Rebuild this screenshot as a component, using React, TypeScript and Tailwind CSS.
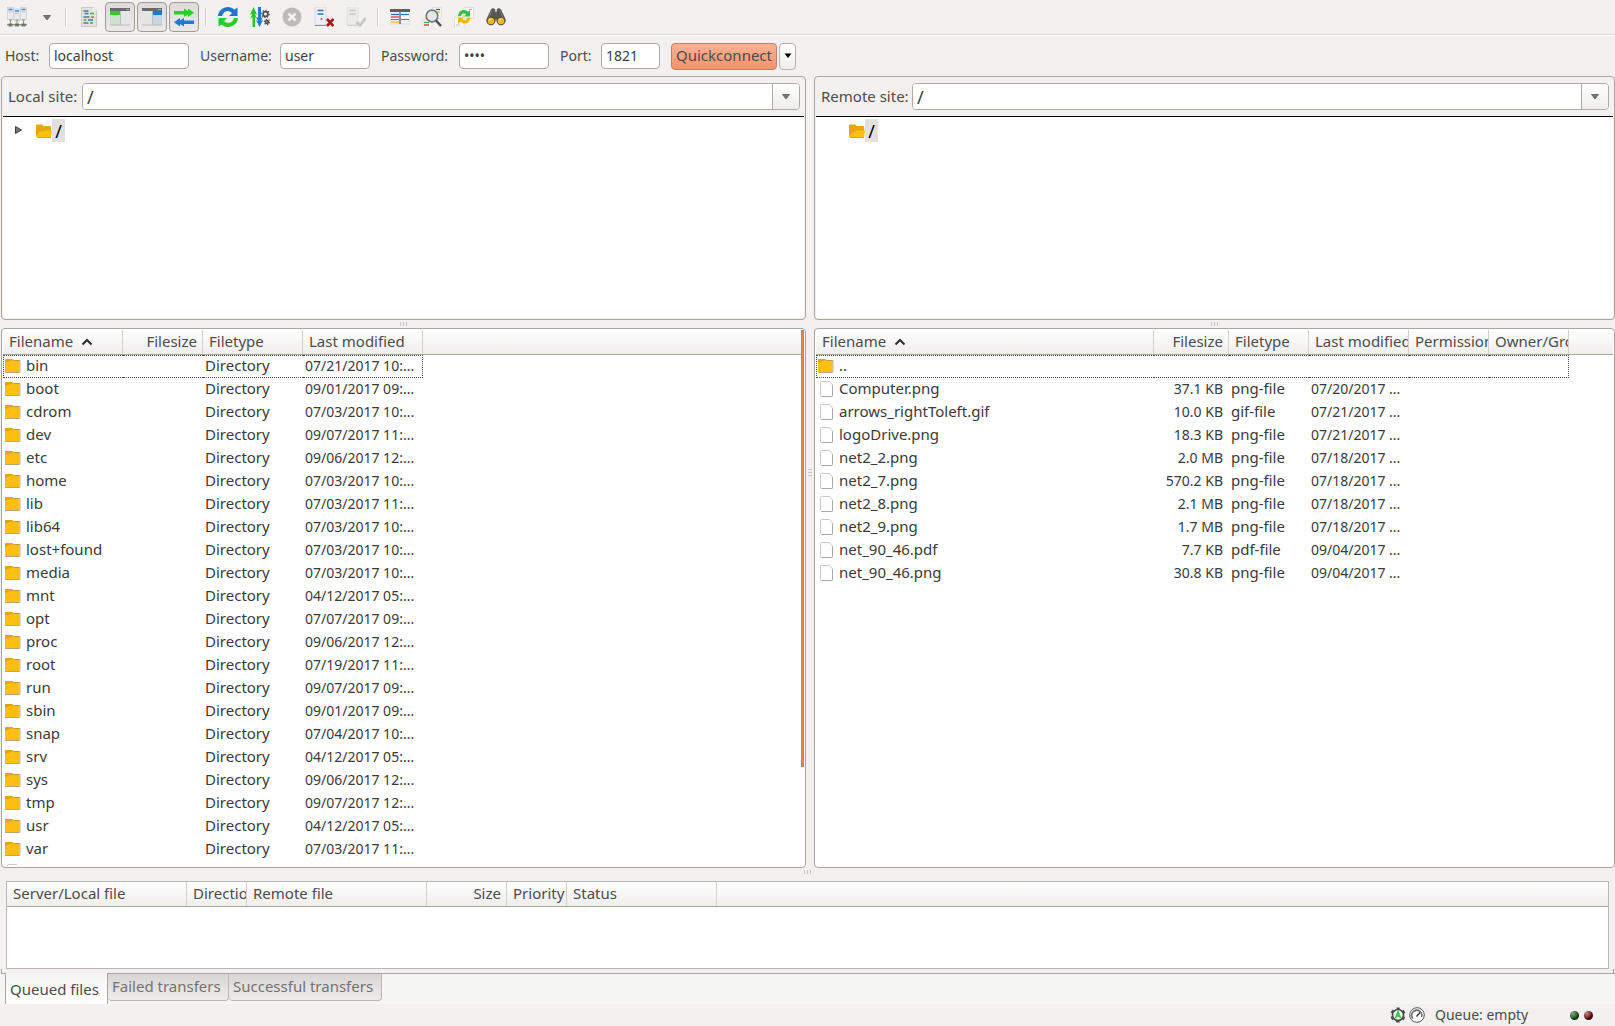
import React from "react";

type Column = { label: string; width: string; right?: boolean; sort?: boolean };

const localColumns: Column[] = [
  { label: "Filename", width: "w-[120px]", sort: true },
  { label: "Filesize", width: "w-[80px]", right: true },
  { label: "Filetype", width: "w-[100px]" },
  { label: "Last modified", width: "w-[120px]" },
];

const remoteColumns: Column[] = [
  { label: "Filename", width: "w-[338px]", sort: true },
  { label: "Filesize", width: "w-[75px]", right: true },
  { label: "Filetype", width: "w-[80px]" },
  { label: "Last modified", width: "w-[100px]" },
  { label: "Permission", width: "w-[80px]" },
  { label: "Owner/Group", width: "w-[80px]" },
];

const queueColumns: Column[] = [
  { label: "Server/Local file", width: "w-[180px]" },
  { label: "Direction", width: "w-[60px]" },
  { label: "Remote file", width: "w-[180px]" },
  { label: "Size", width: "w-[80px]", right: true },
  { label: "Priority", width: "w-[60px]" },
  { label: "Status", width: "w-[150px]" },
];

const localRows: string[][] = [
  ["bin", "", "Directory", "07/21/2017 10:..."],
  ["boot", "", "Directory", "09/01/2017 09:..."],
  ["cdrom", "", "Directory", "07/03/2017 10:..."],
  ["dev", "", "Directory", "09/07/2017 11:..."],
  ["etc", "", "Directory", "09/06/2017 12:..."],
  ["home", "", "Directory", "07/03/2017 10:..."],
  ["lib", "", "Directory", "07/03/2017 11:..."],
  ["lib64", "", "Directory", "07/03/2017 10:..."],
  ["lost+found", "", "Directory", "07/03/2017 10:..."],
  ["media", "", "Directory", "07/03/2017 10:..."],
  ["mnt", "", "Directory", "04/12/2017 05:..."],
  ["opt", "", "Directory", "07/07/2017 09:..."],
  ["proc", "", "Directory", "09/06/2017 12:..."],
  ["root", "", "Directory", "07/19/2017 11:..."],
  ["run", "", "Directory", "09/07/2017 09:..."],
  ["sbin", "", "Directory", "09/01/2017 09:..."],
  ["snap", "", "Directory", "07/04/2017 10:..."],
  ["srv", "", "Directory", "04/12/2017 05:..."],
  ["sys", "", "Directory", "09/06/2017 12:..."],
  ["tmp", "", "Directory", "09/07/2017 12:..."],
  ["usr", "", "Directory", "04/12/2017 05:..."],
  ["var", "", "Directory", "07/03/2017 11:..."],
];

const remoteRows: string[][] = [
  ["..", "", "", "", "", ""],
  ["Computer.png", "37.1 KB", "png-file", "07/20/2017 ...", "", ""],
  ["arrows_rightToleft.gif", "10.0 KB", "gif-file", "07/21/2017 ...", "", ""],
  ["logoDrive.png", "18.3 KB", "png-file", "07/21/2017 ...", "", ""],
  ["net2_2.png", "2.0 MB", "png-file", "07/18/2017 ...", "", ""],
  ["net2_7.png", "570.2 KB", "png-file", "07/18/2017 ...", "", ""],
  ["net2_8.png", "2.1 MB", "png-file", "07/18/2017 ...", "", ""],
  ["net2_9.png", "1.7 MB", "png-file", "07/18/2017 ...", "", ""],
  ["net_90_46.pdf", "7.7 KB", "pdf-file", "09/04/2017 ...", "", ""],
  ["net_90_46.png", "30.8 KB", "png-file", "09/04/2017 ...", "", ""],
];

/* ---------- small drawings ---------- */

const FolderIcon = () => (
  <svg className="h-4 w-4 shrink-0" viewBox="0 0 16 16" aria-hidden="true">
    <path d="M0 2q0-1 1-1h6l1.500 1H14.500v12.500H0z" fill="#ffbf12" />
    <path d="M0 5V2q0-1 1-1h6L8.500 2 4 3.500z" fill="#e3a30f" />
    <path d="M8.500 2.500h6.500v11q0 1-1 1H0" fill="none" stroke="#9a8f6c" strokeOpacity=".7" />
  </svg>
);

const OpenFolderIcon = () => (
  <svg className="h-4 w-4 shrink-0" viewBox="0 0 16 16" aria-hidden="true">
    <path d="M0 2.500Q0 1.500 1 1.500h5L7.500 3H14q1 0 1 1v10H1q-1 0-1-1z" fill="#e6a60e" />
    <path d="M0 13L4.500 8.500H7L8 7.500h8L15.200 14H1z" fill="#ffbf12" />
    <path d="M1 14.500h14" stroke="#aaa59a" />
  </svg>
);

const FileIcon = () => (
  <svg className="h-[18px] w-4 shrink-0" viewBox="0 0 16 18" aria-hidden="true">
    <path d="M2.500 2.500q0-1 1-1h8l3 3.500v10.500q0 1-1 1h-10q-1 0-1-1z" fill="#fff" stroke="#c9cac6" />
    <path d="M14.500 5.500v10q0 1-1 1h-10" fill="none" stroke="#a9aaa6" />
  </svg>
);

const Down = ({ black = false }: { black?: boolean }) => (
  <svg className="h-[6px] w-2" viewBox="0 0 8 6" aria-hidden="true">
    <path d="M.5 .5h7L4 5z" fill={black ? "#000" : "#77767a"} stroke={black ? "none" : "#5c5b5a"} strokeWidth=".8" />
  </svg>
);

const I = ({ children }: { children: React.ReactNode }) => (
  <svg className="h-5 w-5" viewBox="0 0 20 20" aria-hidden="true">{children}</svg>
);

const SiteManagerIcon = () => (
  <I>
    {[0.5, 7, 13.5].map((x, i) => (
      <g key={x}>
        <rect x={x} y={i === 1 ? 2 : 0.5} width="6" height="12" fill="#e9ebee" stroke="#c6c6c6" strokeWidth=".6" />
        <path d={`M${x + 1} ${i === 1 ? 4 : 2.5}h4`} stroke="#4b8bd0" strokeWidth="1.600" />
        <path d={`M${x + 1} ${i === 1 ? 6.5 : 5}h4`} stroke="#b9c6d6" />
        <path d={`M${x + 1.5} 13h3`} stroke="#8c8c8c" />
        <path d={`M${x + 3} 13v4`} stroke="#8c9a86" />
        <rect x={x + 1} y="16.500" width="4" height="3" fill="#787a74" />
      </g>
    ))}
    <path d="M0 17.800h20" stroke="#66705f" />
  </I>
);

const LogIcon = () => (
  <I>
    <path d="M2.500.5h12l3 3v16h-15z" fill="#e2e2e0" stroke="#c8c8c4" />
    <path d="M14.500.5v3h3z" fill="#fafafa" />
    <path d="M4.500 4h5M4.500 10h6M4.500 16h5" stroke="#66737c" strokeWidth="1.300" />
    <path d="M5.500 6.500h4M9 13h5" stroke="#3a78b8" strokeWidth="1.300" />
    <path d="M11 6.500h4M12 10h3M4.500 13h3M11 16h3" stroke="#45b23e" strokeWidth="1.300" />
  </I>
);

const LocalTreeIcon = () => (
  <I>
    <rect x="0" y="1" width="20" height="3" fill="#6a6a6a" />
    <path d="M16 2.500h3" stroke="#aaa" />
    <rect x="0" y="4" width="10" height="4" fill="#2ecc22" />
    <rect x="0" y="8" width="10" height="10" fill="#cce3cc" />
    <rect x="11" y="4" width="9" height="14" fill="#e5e5e5" />
    <path d="M0 18h20M10.500 4v14" stroke="#bdbdbd" />
  </I>
);

const RemoteTreeIcon = () => (
  <I>
    <rect x="0" y="1" width="20" height="3" fill="#6a6a6a" />
    <path d="M16 2.500h3" stroke="#aaa" />
    <rect x="0" y="4" width="10" height="14" fill="#e5e5e5" />
    <rect x="11" y="4" width="9" height="4" fill="#1c78d4" />
    <rect x="11" y="8" width="9" height="10" fill="#c5d3e3" />
    <path d="M0 18h20M10.500 4v14" stroke="#bdbdbd" />
  </I>
);

const QueueIcon = () => (
  <I>
    <path d="M0 4h10V1.500L14 4V1.500L20 5.700 14 10V7.500L10 10V7.500H0z" fill="#2bd020" />
    <path d="M20 13.500H10V11L6 13.500V11L0 15.200 6 19.500V17l4 2.500V17h10z" fill="#1e7bd6" />
  </I>
);

const RefreshIcon = () => (
  <I>
    <path d="M0 9C.5 3.500 5 0 10 0q4 0 6.500 2.500L19.500.5V9H11l3-3Q12 4 9.500 4 5.500 4.200 4 9z" fill="#1f76cf" />
    <path d="M20 11c-.5 5.500-5 9-10 9q-4 0-6.500-2.500L.5 19.500V11H9l-3 3q2 2 4.500 2 4-.2 5.500-5z" fill="#24cf28" />
  </I>
);

const Cog = ({ x, y, r }: { x: number; y: number; r: number }) => (
  <g transform={`translate(${x} ${y})`}>
    <circle r={r} fill="none" stroke="#50504e" strokeWidth="1.700" />
    <circle r={r + 1.3} fill="none" stroke="#50504e" strokeWidth="1.300" strokeDasharray="1.300 1.500" />
  </g>
);

const ProcessIcon = () => (
  <I>
    <path d="M2.500 20V10L0 12 2.500 7 0 7.500 3.500 0 7 7.500 5 7l2 5-2-2v10z" fill="#23c92a" />
    <path d="M8 0h3v11l2-1-2 4 2-1-3.500 7L6 13l2 1-2-4 2 1z" fill="#1d79d6" />
    <Cog x={15.5} y={7} r={2.4} />
    <Cog x={17} y={15} r={1.4} />
  </I>
);

const CancelIcon = () => (
  <I>
    <circle cx="10" cy="10" r="9.500" fill="#bcbab9" />
    <path d="M6.500 6.500l7 7M13.500 6.500l-7 7" stroke="#f2f1f0" strokeWidth="2.600" />
  </I>
);

const DisconnectIcon = () => (
  <I>
    <path d="M1 0h11v18H1z" fill="#eef0f3" stroke="#cfd1d4" strokeWidth=".8" />
    <path d="M3.500 3.500h6M3.500 7h6" stroke="#2b73c4" strokeWidth="1.500" />
    <circle cx="7.500" cy="12" r="1.200" fill="#8a94a0" />
    <path d="M1 18.500h11" stroke="#8b8d90" />
    <path d="M13 12l6.500 7M19.500 12L13 19" stroke="#a91616" strokeWidth="2.600" />
  </I>
);

const ReconnectIcon = () => (
  <I>
    <path d="M1 0h11v18H1z" fill="#ebebeb" stroke="#dcdcdc" strokeWidth=".8" />
    <path d="M3.500 3.500h6M3.500 7h6" stroke="#c5c5c5" strokeWidth="1.500" />
    <path d="M1 18.500h11" stroke="#cfcfcf" />
    <path d="M10.500 15l3.500 3.500L19.500 11" fill="none" stroke="#c6c6c4" strokeWidth="2.600" />
  </I>
);

const FilterIcon = () => (
  <I>
    <rect x="0" y="2.500" width="20" height="14.500" fill="#f2f2f2" stroke="#c9c9c9" strokeWidth=".6" />
    <rect x="0" y="2" width="20" height="3" fill="#5f5f5f" />
    <path d="M1 7.500h8" stroke="#2468b0" strokeWidth="1.200" />
    <path d="M11 7.500h8" stroke="#2673c8" strokeWidth="1.200" />
    <path d="M1 10h8" stroke="#d33" strokeWidth="1.200" />
    <path d="M1 12.500h8M11 12.500h8" stroke="#2bab3a" strokeWidth="1.200" />
    <path d="M1 15h8" stroke="#edbd20" strokeWidth="1.200" />
    <path d="M10 3v14" stroke="#6a6a6a" strokeWidth="1.400" />
  </I>
);

const SearchIcon = () => (
  <I>
    <path d="M11 .5h8v11h-8zM1 12h9v8H1z" fill="#fff" stroke="#ccc" strokeWidth=".6" />
    <path d="M14 2.500h4" stroke="#d22" strokeWidth="1.300" />
    <path d="M15 5h3" stroke="#e2b31f" strokeWidth="1.300" />
    <path d="M2 15.500h5" stroke="#39ad3e" strokeWidth="1.300" />
    <path d="M2 18h5" stroke="#d22" strokeWidth="1.300" />
    <circle cx="10" cy="9" r="5.800" fill="#e4e8ea" stroke="#75787a" strokeWidth="1.700" />
    <path d="M14 13.500l5 5.500" stroke="#4e4e4e" strokeWidth="2.500" />
  </I>
);

const SyncBrowseIcon = () => (
  <I>
    <path d="M10 .5h9.500V11H10zM.5 10H10v10H.5z" fill="#fff" stroke="#c9c9c9" strokeWidth=".6" />
    <path d="M4 9c.5-4 3-6 6-6q2.500 0 4 1.700L16 3v6.500h-6L12 7.500Q8 4.500 7 9z" fill="#32c235" />
    <path d="M16.500 10.500c-.5 4-3 6-6 6q-2.500 0-4-1.700L4 17v-6.500h6L8.300 12q3.700 3 5-1.500z" fill="#efb619" />
    <path d="M15 2.500h3" stroke="#e0b030" />
    <path d="M2 18h4" stroke="#bbb" />
  </I>
);

const BinocularsIcon = () => (
  <I>
    <path d="M5 2.500Q6.500.5 9 2l.5 3h1l.5-3q2.500-1.500 4 .5L19.500 12v3h-8.500l-1-3-1 3H.5v-3z" fill="#565656" />
    <path d="M6 3.500l-3 7M14 3.500l3 7" stroke="#7b7b7b" />
    <circle cx="5" cy="14" r="4.300" fill="#4d4c4a" />
    <circle cx="15" cy="14" r="4.300" fill="#4d4c4a" />
    <circle cx="5" cy="14" r="3.300" fill="#fdb515" />
    <circle cx="15" cy="14" r="3.300" fill="#fdb515" />
    <path d="M3.500 13.500q.5-1.500 2-1.500M13.500 13.500q.5-1.500 2-1.500" fill="none" stroke="#ffe9ae" strokeWidth="1.200" />
  </I>
);

/* ---------- building blocks ---------- */

const ToolButton = ({ label, children }: { label: string; children: React.ReactNode }) => (
  <button aria-label={label} className="flex h-[30px] w-8 items-center justify-center">{children}</button>
);

const ToggleButton = ({ label, children }: { label: string; children: React.ReactNode }) => (
  <button
    aria-label={label}
    aria-pressed="true"
    className="mr-0.5 flex h-[30px] w-[30px] items-center justify-center rounded border border-[#a09d99] bg-linear-to-b from-[#dedcda] to-[#eaE9e8]"
  >
    {children}
  </button>
);

const Separator = ({ className }: { className: string }) => (
  <div className={`h-[18px] w-0.5 border-l border-[#d3d0cc] bg-white ${className}`} />
);

const Field = ({ id, label, labelWidth, width, value, type = "text" }: {
  id: string; label: string; labelWidth: string; width: string; value: string; type?: string;
}) => (
  <>
    <label htmlFor={id} className={`${labelWidth} shrink-0 whitespace-nowrap`}>{label}</label>
    <input
      id={id}
      type={type}
      defaultValue={value}
      className={`${width} mr-[11px] h-[26px] shrink-0 rounded border border-[#aeaaa5] bg-white px-1 pb-0.5 text-[#3c3c3c] outline-none`}
    />
  </>
);

const HeaderRow = ({ columns }: { columns: Column[] }) => (
  <thead className="text-[15px]">
    <tr>
      {columns.map((c) => (
        <th
          key={c.label}
          scope="col"
          className="h-[25px] overflow-hidden border-b border-[#a9a5a1] bg-linear-to-b from-white to-[#efeeed] p-0 text-left font-normal"
        >
          <div
            className={`flex h-6 items-center overflow-hidden border-r border-[#d2cfcc] pl-1.5 whitespace-nowrap text-[#4c4c4c] ${c.right ? "justify-end pr-[5px]" : ""}`}
          >
            {c.label}
            {c.sort && (
              <svg className="ml-2 h-2 w-3 shrink-0" viewBox="0 0 12 8" aria-hidden="true">
                <path d="M1.500 6.500L6 2l4.500 4.500" fill="none" stroke="#2e2e2e" strokeWidth="2" />
              </svg>
            )}
          </div>
        </th>
      ))}
      <td className="h-[25px] border-b border-[#a9a5a1] bg-linear-to-b from-white to-[#efeeed] p-0" />
    </tr>
  </thead>
);

const Columns = ({ columns }: { columns: Column[] }) => (
  <colgroup>
    {columns.map((c) => <col key={c.label} className={c.width} />)}
    <col />
  </colgroup>
);

const FileTable = ({ columns, rows, folders, label }: {
  columns: Column[]; rows: string[][]; folders: number; label: string;
}) => (
  <table aria-label={label} className="w-full table-fixed border-separate border-spacing-0 self-start">
    <Columns columns={columns} />
    <HeaderRow columns={columns} />
    <tbody className="text-[#3a3a3a]">
      {rows.map((row, r) => (
        <tr key={row[0]}>
          {row.map((cell, c) => (
            <td
              key={c}
              className={[
                "h-[23px] overflow-hidden whitespace-nowrap p-0 pb-0.5 leading-[19px]",
                r === 0 ? "border-y border-dotted border-[#4a4a4a]" : "",
                r === 0 && c === 0 ? "border-l" : "",
                r === 0 && c === row.length - 1 ? "border-r" : "",
                c === 0 || c === 2 ? "text-[15px]" : "text-sm leading-[19px]",
                columns[c].right ? "pr-1.5 text-right" : c === 0 ? "" : "pl-0.5",
              ].join(" ")}
            >
              {c === 0 ? (
                <div className={`flex items-center gap-[5px] ${r === 0 ? "pl-px" : "pl-0.5"}`}>
                  {r < folders ? <FolderIcon /> : <FileIcon />}
                  <span>{cell}</span>
                </div>
              ) : cell}
            </td>
          ))}
          <td className="p-0" />
        </tr>
      ))}
    </tbody>
  </table>
);

const Grip = ({ vertical = false }: { vertical?: boolean }) => (
  <span className={`flex gap-0.5 ${vertical ? "flex-col" : ""}`}>
    {[0, 1, 2].map((i) => (
      <i key={i} className={`block bg-[#c9c6c2] ${vertical ? "h-px w-1" : "h-1 w-px"}`} />
    ))}
  </span>
);

const Site = ({ id, label, labelWidth, expander, list, grow }: {
  id: string; label: string; labelWidth: string; expander?: boolean; list: React.ReactNode; grow: string;
}) => (
  <section className={`flex min-h-0 min-w-0 basis-0 flex-col ${grow}`}>
    <div className="flex h-[244px] shrink-0 flex-col rounded border border-[#a9a5a1] bg-[#f2f1f0] px-px pb-px">
      <div className="flex h-[39px] shrink-0 items-center pr-1 pl-[5px]">
        <label htmlFor={id} className={`${labelWidth} shrink-0 text-[15px] whitespace-nowrap`}>{label}</label>
        <div className="flex h-[27px] min-w-0 flex-1 overflow-hidden rounded border border-[#aeaaa5] bg-white">
          <input id={id} defaultValue="/" className="min-w-0 flex-1 bg-white px-1 text-lg text-[#3c3c3c] outline-none" />
          <button
            aria-label={`${label} history`}
            className="flex w-[27px] items-center justify-center border-l border-[#aeaaa5] bg-linear-to-b from-white to-[#eeedec]"
          >
            <Down />
          </button>
        </div>
      </div>
      <div role="tree" aria-label={label} className="min-h-0 flex-1 border-t border-black bg-white pt-0.5">
        <div role="treeitem" className="flex h-[23px] items-center">
          <span className="flex w-[33px] pb-0.5 pl-3">
            {expander && (
              <svg className="h-2 w-[7px]" viewBox="0 0 7 8" aria-hidden="true">
                <path d="M.5.5v7L6.500 4z" fill="#777" stroke="#3f3f3f" />
              </svg>
            )}
          </span>
          <OpenFolderIcon />
          <span className="flex h-[23px] w-[13px] items-center justify-center bg-[#e3e1df] text-lg text-black">/</span>
        </div>
      </div>
    </div>
    <div className="flex h-2 shrink-0 items-center justify-center"><Grip /></div>
    <div className="flex min-h-0 flex-1 overflow-hidden rounded border border-[#a9a5a1] bg-white p-px">{list}</div>
  </section>
);

const Led = ({ name, color }: { name: string; color: string }) => (
  <span role="img" aria-label={name} className={`h-[9px] w-[9px] rounded-full bg-radial-[at_30%_25%] from-[#9a9a9a] to-60% ${color}`} />
);

export default function App() {
  return (
    <div className="flex h-screen flex-col overflow-hidden bg-[#f2f1f0] font-['Noto_Sans',sans-serif] text-sm text-[#4c4c4c]">
      {/* Toolbar */}
      <div role="toolbar" className="flex h-[35px] shrink-0 items-center border-b border-[#dcd9d6] pl-px">
        <ToolButton label="Site Manager"><SiteManagerIcon /></ToolButton>
        <button aria-label="Saved sites" className="flex h-[30px] w-6 items-center justify-center pt-0.5 pl-1"><Down /></button>
        <Separator className="mr-[6px] ml-2" />
        <ToolButton label="Toggle message log"><LogIcon /></ToolButton>
        <ToggleButton label="Toggle local tree"><LocalTreeIcon /></ToggleButton>
        <ToggleButton label="Toggle remote tree"><RemoteTreeIcon /></ToggleButton>
        <ToggleButton label="Toggle transfer queue"><QueueIcon /></ToggleButton>
        <Separator className="mr-[5px] ml-1" />
        <ToolButton label="Refresh"><RefreshIcon /></ToolButton>
        <ToolButton label="Process queue"><ProcessIcon /></ToolButton>
        <ToolButton label="Cancel"><CancelIcon /></ToolButton>
        <ToolButton label="Disconnect"><DisconnectIcon /></ToolButton>
        <ToolButton label="Reconnect"><ReconnectIcon /></ToolButton>
        <Separator className="mx-[5px]" />
        <ToolButton label="Filter"><FilterIcon /></ToolButton>
        <ToolButton label="Compare directories"><SearchIcon /></ToolButton>
        <ToolButton label="Synchronized browsing"><SyncBrowseIcon /></ToolButton>
        <ToolButton label="Find files"><BinocularsIcon /></ToolButton>
      </div>

      {/* Quick connect */}
      <form className="flex h-[41px] shrink-0 items-center border-t border-white pl-[5px]" onSubmit={(e) => e.preventDefault()}>
        <Field id="host" label="Host:" labelWidth="w-11" width="w-[140px]" value="localhost" />
        <Field id="user" label="Username:" labelWidth="w-20" width="w-[90px]" value="user" />
        <Field id="pass" label="Password:" labelWidth="w-[78px]" width="w-[90px]" value="pass" type="password" />
        <Field id="port" label="Port:" labelWidth="w-[41px]" width="w-[59px]" value="1821" />
        <button className="h-[27px] w-[106px] rounded border border-[#b9826c] bg-linear-to-b from-[#ffb193] to-[#f7936a] text-[15px]">
          Quickconnect
        </button>
        <button
          type="button"
          aria-label="Quickconnect history"
          className="ml-0.5 flex h-[27px] w-[17px] items-center justify-center rounded border border-[#b5b1ac] bg-linear-to-b from-white to-[#eeedec]"
        >
          <Down black />
        </button>
      </form>

      {/* Local and remote sites */}
      <main className="flex min-h-0 flex-1 pl-px">
        <Site
          id="local-site"
          label="Local site:"
          labelWidth="w-[74px]"
          expander
          grow="grow-[805]"
          list={
            <>
              <div className="min-w-0 flex-1 overflow-hidden">
                <FileTable
                  label="Local files"
                  columns={localColumns}
                  rows={[...localRows, ["initrd.img", "", "img-file", "09/01/2017 09:..."]]}
                  folders={22}
                />
              </div>
              <div className="flex w-[3px] flex-col"><div className="h-[81.5%] bg-[#f07746]" /></div>
            </>
          }
        />
        <div className="flex w-2 shrink-0 items-center justify-center"><Grip vertical /></div>
        <Site
          id="remote-site"
          label="Remote site:"
          labelWidth="w-[91px]"
          grow="grow-[801]"
          list={<FileTable label="Remote files" columns={remoteColumns} rows={remoteRows} folders={1} />}
        />
      </main>

      <div className="flex h-[13px] shrink-0 justify-center pt-0.5"><Grip /></div>

      {/* Transfer queue */}
      <section className="shrink-0">
        <div className="px-1.5">
          <div className="h-[88px] border border-[#bab7b3] bg-white">
            <table aria-label="Queue" className="w-full table-fixed border-separate border-spacing-0">
              <Columns columns={queueColumns} />
              <HeaderRow columns={queueColumns} />
            </table>
          </div>
        </div>
        <div className="mx-px h-1 border-x border-[#a9a5a1]" />
        <div role="tablist" className="flex h-[31px] items-start bg-[#f5f5f4] pl-px text-[15px]">
          <div className="w-1 border-t border-[#a9a5a1]" />
          <button
            role="tab"
            aria-selected="true"
            className="h-[31px] w-[103px] border-x border-[#a9a5a1] bg-linear-to-b from-[#f5f5f4] to-white pt-0.5 pl-1 text-left"
          >
            Queued files
          </button>
          <div className="flex flex-1 border-t border-[#a9a5a1]">
            <button
              role="tab"
              aria-selected="false"
              className="h-[27px] w-[121px] rounded-b border-r border-b border-[#bab7b3] bg-linear-to-b from-[#d8d6d4] to-[#eeedec] pl-1 text-left text-[#747270]"
            >
              Failed transfers
            </button>
            <button
              role="tab"
              aria-selected="false"
              className="h-[27px] w-[153px] rounded-b border-r border-b border-[#bab7b3] bg-linear-to-b from-[#d8d6d4] to-[#eeedec] pl-1 text-left text-[#747270]"
            >
              Successful transfers
            </button>
          </div>
        </div>
      </section>

      {/* Status bar */}
      <footer className="flex h-[22px] shrink-0 items-center justify-end pr-[22px]">
        <svg className="h-4 w-4" viewBox="0 0 16 16" role="img" aria-label="Transfer type: automatic">
          <circle cx="8" cy="8" r="5.500" fill="#f4f4f4" stroke="#4a4a4a" strokeWidth="1.600" />
          <circle cx="8" cy="8" r="6.700" fill="none" stroke="#4a4a4a" strokeWidth="1.800" strokeDasharray="3.500 3.516" strokeDashoffset="1.750" transform="rotate(-90 8 8)" />
          <path d="M5.500 11L8 4.800 10.500 11M6.500 9h3" fill="none" stroke="#27c732" strokeWidth="1.600" />
        </svg>
        <svg className="ml-[3px] h-4 w-4" viewBox="0 0 16 16" role="img" aria-label="Speed limits">
          <circle cx="8" cy="8" r="7.300" fill="#fff" stroke="#555" />
          <path d="M4 11.500A5 5 0 1 1 12.500 10" fill="none" stroke="#666" strokeWidth="1.500" />
          <path d="M7.500 9.500L11 5.500" stroke="#333" strokeWidth="1.400" />
        </svg>
        <span className="ml-[10px] w-[135px]">Queue: empty</span>
        <span className="flex gap-[5px]">
          <Led name="Receive" color="via-[#1d6b1d] to-[#0c330c]" />
          <Led name="Send" color="via-[#8c1717] to-[#480808]" />
        </span>
      </footer>
    </div>
  );
}
